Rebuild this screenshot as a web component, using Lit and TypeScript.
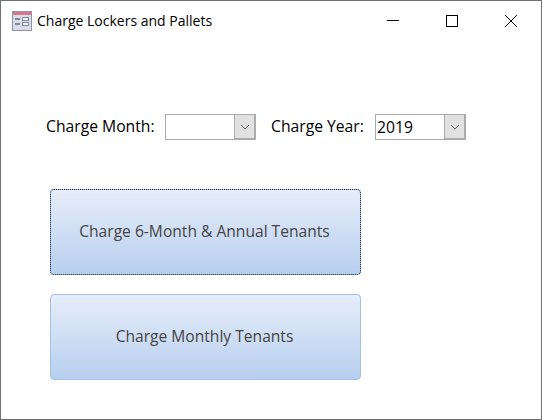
import { LitElement, html, css, svg } from 'lit';
import { customElement } from 'lit/decorators.js';

const chevron = svg`<path d="M1 1l4 4 4-4" fill="none" stroke="#666" stroke-width="1"/>`;

@customElement('app-root')
export class AppRoot extends LitElement {
    static styles = css`
        :host {
            display: block;
            width: 542px;
            height: 420px;
        }
        .window {
            box-sizing: border-box;
            width: 542px;
            height: 420px;
            background: #fff;
            border: 1px solid #707070;
            font-family: "Open Sans", "Noto Sans", sans-serif;
            color: #000;
        }
        .titlebar {
            display: flex;
            align-items: center;
            height: 39px;
            padding-left: 11px;
            padding-right: 1px;
        }
        .title {
            margin-left: 5px;
            font-size: 14px;
            color: #000;
            flex: 1;
        }
        .ctl {
            width: 59px;
            height: 39px;
            display: flex;
            align-items: center;
            justify-content: center;
        }
        .filters {
            display: flex;
            align-items: center;
            height: 26px;
            margin-top: 74px;
            padding-left: 45px;
        }
        .label {
            font-size: 15.7px;
            line-height: 24px;
            padding-bottom: 3px;
            width: 119px;
            white-space: nowrap;
        }
        .label.year {
            width: 104px;
            margin-left: 15px;
        }
        .combo {
            box-sizing: border-box;
            width: 91px;
            height: 26px;
            display: flex;
            border: 1px solid #ababab;
            background: #fff;
        }
        .value {
            flex: 1;
            font-size: 15.7px;
            line-height: 24px;
            padding-left: 1px;
        }
        .arrow {
            box-sizing: border-box;
            width: 21px;
            background: #e1e1e1;
            border-left: 1px solid #ababab;
            border-right: 1px solid #ababab;
            border-bottom: 1px solid #ababab;
            display: flex;
            align-items: center;
            justify-content: center;
        }
        .buttons {
            display: flex;
            flex-direction: column;
            gap: 19px;
            margin-top: 49px;
            margin-left: 49px;
            width: 311px;
        }
        .btn {
            box-sizing: border-box;
            height: 86px;
            display: flex;
            align-items: center;
            justify-content: center;
            padding-bottom: 3px;
            padding-right: 2px;
            border: 1px solid #a3c0e6;
            border-radius: 4px;
            background: linear-gradient(#e7edf9, #b7cfef);
            font-size: 15.6px;
            color: #444;
        }
        .btn.focus {
            outline: 1px dotted #1f2d45;
            outline-offset: -1px;
        }
    `;

    render() {
        return html`
            <div class="window">
                <div class="titlebar">
                    <svg width="20" height="20" viewBox="0 0 20 20">
                        <rect x="0.5" y="0.5" width="19" height="19" fill="#d9dde9" stroke="#8f93a8"/>
                        <rect x="1" y="1" width="18" height="3" fill="#d9788c"/>
                        <path d="M3 8h5M3 13h5" stroke="#8088a0" stroke-width="2"/>
                        <rect x="10.5" y="6.5" width="6" height="3" fill="#f4f6fa" stroke="#8088a0"/>
                        <rect x="10.5" y="11.5" width="6" height="3" fill="#f4f6fa" stroke="#8088a0"/>
                    </svg>
                    <span class="title">Charge Lockers and Pallets</span>
                    <div class="ctl">
                        <svg width="12" height="12" viewBox="0 0 12 12"><path d="M0 5.5h12" stroke="#000"/></svg>
                    </div>
                    <div class="ctl">
                        <svg width="12" height="12" viewBox="0 0 12 12"><rect x="0.5" y="0.5" width="11" height="11" fill="none" stroke="#000"/></svg>
                    </div>
                    <div class="ctl">
                        <svg width="12" height="12" viewBox="0 0 12 12"><path d="M0 0l12 12M12 0L0 12" stroke="#000"/></svg>
                    </div>
                </div>
                <div class="filters">
                    <span class="label">Charge Month:</span>
                    <div class="combo">
                        <span class="value"></span>
                        <span class="arrow"><svg width="10" height="6" viewBox="0 0 10 6">${chevron}</svg></span>
                    </div>
                    <span class="label year">Charge Year:</span>
                    <div class="combo">
                        <span class="value">2019</span>
                        <span class="arrow"><svg width="10" height="6" viewBox="0 0 10 6">${chevron}</svg></span>
                    </div>
                </div>
                <div class="buttons">
                    <div class="btn focus">Charge 6-Month &amp; Annual Tenants</div>
                    <div class="btn">Charge Monthly Tenants</div>
                </div>
            </div>
        `;
    }
}
